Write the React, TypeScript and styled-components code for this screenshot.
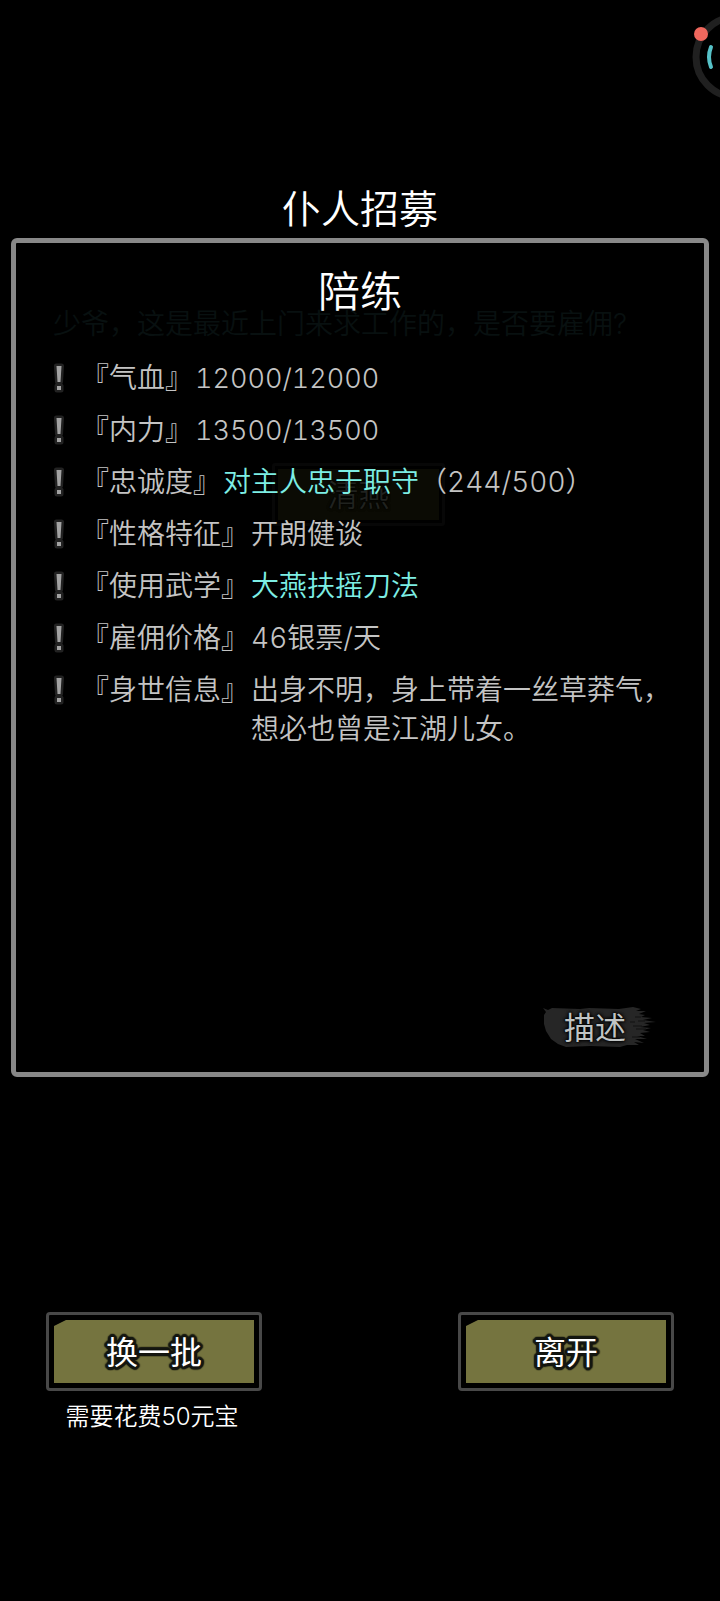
import React from "react";
import styled, { createGlobalStyle } from "styled-components";

const GlobalStyle = createGlobalStyle`
  body {
    margin: 0;
    background: #000;
    color: #fff;
    font-family: Inter, "Noto Sans CJK SC", sans-serif;
    font-weight: 350;
    text-spacing-trim: space-all;
  }
  *, *::before, *::after { box-sizing: border-box; }
  h1, h2, p, dl, dd { margin: 0; font-weight: inherit; }
`;

const Page = styled.main`
  position: relative;
  display: flex;
  flex-direction: column;
  min-height: 100vh;
  padding: 180px 11px 48px;
  overflow: hidden;
`;

const Title = styled.h1`
  font-size: 39px;
  line-height: 58px;
  text-align: center;
`;

const FloatingBall = styled.button`
  position: absolute;
  top: 8px;
  right: -63px;
  width: 96px;
  height: 96px;
  padding: 0;
  border: 0;
  background: none;
`;

const Panel = styled.section`
  position: relative;
  display: flex;
  flex-direction: column;
  min-height: 839px;
  padding: 18px 16px 22px 36px;
  border: 5px solid #888;
  border-radius: 6px;
`;

const PanelTitle = styled.h2`
  padding: 0 20px 0 0;
  margin-bottom: 36px;
  font-size: 42px;
  line-height: 62px;
  text-align: center;
`;

const Prompt = styled.p`
  position: absolute;
  z-index: -1;
  top: 62px;
  left: 37px;
  color: #081010;
  font-size: 28px;
  line-height: 39px;
`;

const DimmedChoice = styled.button`
  position: absolute;
  z-index: -1;
  top: 220px;
  left: calc(50% - 88px);
  width: 173px;
  height: 63px;
  padding: 0;
  border: 3px solid #070707;
  border-radius: 3px;
  background: #0b0b04;
  box-shadow: inset 0 0 0 3px #000;
  color: #20221f;
  font: inherit;
  font-size: 31px;
  line-height: 54px;
  text-shadow: 0 0 3px #000, 0 0 3px #000;
`;

const Stats = styled.dl`
  display: flex;
  flex-direction: column;
  gap: 13px;
  color: #c4c4c4;
  font-size: 28px;
  line-height: 39px;
  font-variant-numeric: tabular-nums;
`;

const StatRow = styled.div`
  display: flex;
  align-items: flex-start;
`;

const Mark = styled.svg`
  flex: none;
  width: 16px;
  height: 39px;
  margin-right: 13px;
`;

const StatName = styled.dt`
  flex: none;
  margin-right: 2px;
`;

const StatValue = styled.dd`
  flex: 1;
`;

const Accent = styled.span`
  color: #7deee4;
`;

const Gauge = styled.span`
  font-size: 27px;
`;

const DescribeButton = styled.button`
  position: relative;
  align-self: flex-end;
  display: flex;
  align-items: center;
  justify-content: center;
  width: 116px;
  height: 44px;
  margin: auto 31px 0 0;
  padding: 0 8px 0 0;
  border: 0;
  background: none;
  color: #c0c4c4;
  font: inherit;
  font-size: 31px;
  font-weight: 400;
  line-height: 44px;
  text-shadow: 0 0 3px #000, 0 0 3px #000, 0 0 4px #000;
`;

const Brush = styled.svg`
  position: absolute;
  z-index: -1;
  inset: 0;
  width: 100%;
  height: 100%;
`;

const Actions = styled.nav`
  display: flex;
  justify-content: space-between;
  align-items: flex-start;
  padding: 235px 35px 0;
`;

const Action = styled.div`
  display: flex;
  flex-direction: column;
  align-items: center;
`;

const ActionButton = styled.button`
  width: 216px;
  height: 79px;
  padding: 5px;
  border: 3px solid #484848;
  border-radius: 4px;
  background: #000;
  color: #fff;
  font: inherit;
  font-size: 32px;
  font-weight: 400;
`;

const outline = [
  [3, 0], [-3, 0], [0, 3], [0, -3], [2, 2], [-2, 2], [2, -2], [-2, -2],
  [3, 1], [3, -1], [-3, 1], [-3, -1], [1, 3], [-1, 3], [1, -3], [-1, -3],
]
  .map(([x, y]) => `${x}px ${y}px 1px #151711`)
  .join(", ");

const ActionFace = styled.span`
  display: block;
  height: 63px;
  background: #75743f;
  clip-path: polygon(12px 0, 100% 0, 100% 100%, 0 100%, 0 6px);
  line-height: 66px;
  text-shadow: ${outline};
`;

const Cost = styled.p`
  padding: 8px 4px 0 0;
  font-size: 24px;
  line-height: 36px;
`;

const stats: { name: string; value: React.ReactNode }[] = [
  { name: "气血", value: <Gauge>12000/12000</Gauge> },
  { name: "内力", value: <Gauge>13500/13500</Gauge> },
  { name: "忠诚度", value: <><Accent>对主人忠于职守</Accent>（244/500）</> },
  { name: "性格特征", value: "开朗健谈" },
  { name: "使用武学", value: <Accent>大燕扶摇刀法</Accent> },
  { name: "雇佣价格", value: "46银票/天" },
  { name: "身世信息", value: "出身不明，身上带着一丝草莽气，想必也曾是江湖儿女。" },
];

function ExclamationMark() {
  return (
    <Mark viewBox="0 0 16 39" aria-hidden="true">
      <g stroke="#222" strokeWidth="5" strokeLinejoin="round" fill="#222">
        <path d="M4.5 7h5l-1 16h-3z" />
        <path d="M5 27h4v4h-4z" />
      </g>
      <path d="M4.5 7h5l-1 16h-3z" fill="#a2a2a2" />
      <path d="M5 27h4v4h-4z" fill="#a2a2a2" />
    </Mark>
  );
}

export default function App() {
  return (
    <>
      <GlobalStyle />
      <Page>
        <FloatingBall aria-label="悬浮球">
          <svg width="96" height="96" viewBox="0 0 96 96">
            <circle cx="49" cy="49" r="40" fill="none" stroke="#202020" strokeWidth="7" />
            <path d="M24 39q-4 10 0 20" fill="none" stroke="#56c2c8" strokeWidth="4" strokeLinecap="round" />
            <circle cx="14" cy="26" r="7" fill="#ef675d" />
          </svg>
        </FloatingBall>

        <Title>仆人招募</Title>

        <Panel>
          <Prompt>少爷，这是最近上门来求工作的，是否要雇佣?</Prompt>
          <DimmedChoice>清燕</DimmedChoice>
          <PanelTitle>陪练</PanelTitle>
          <Stats>
            {stats.map((stat) => (
              <StatRow key={stat.name}>
                <ExclamationMark />
                <StatName>『{stat.name}』</StatName>
                <StatValue>{stat.value}</StatValue>
              </StatRow>
            ))}
          </Stats>
          <DescribeButton>
            <Brush viewBox="0 0 116 44" aria-hidden="true">
              <path
                fill="#262626"
                d="M2 2l5 2 4-2 28 1 9-1 30 1 14-2 8 2-5 2 10 0-7 3 6 1-4 2 11 1-9 2 13 2-12 1 6 2-10 2 11 1-8 2 7 2-10 1 5 3-8 0 10 3-12 0 9 4-10-1 5 3-12 0-7 2-30-1-24 1-8-3-7-5-5-8-2-7 0-9 2-3z"
              />
              <path
                stroke="#101010"
                fill="none"
                d="M89 16h5m3-1h7m-12 5h9m-6 3h10m-14 8h8m-5-20h6"
              />
            </Brush>
            描述
          </DescribeButton>
        </Panel>

        <Actions>
          <Action>
            <ActionButton><ActionFace>换一批</ActionFace></ActionButton>
            <Cost>需要花费50元宝</Cost>
          </Action>
          <Action>
            <ActionButton><ActionFace>离开</ActionFace></ActionButton>
          </Action>
        </Actions>
      </Page>
    </>
  );
}
